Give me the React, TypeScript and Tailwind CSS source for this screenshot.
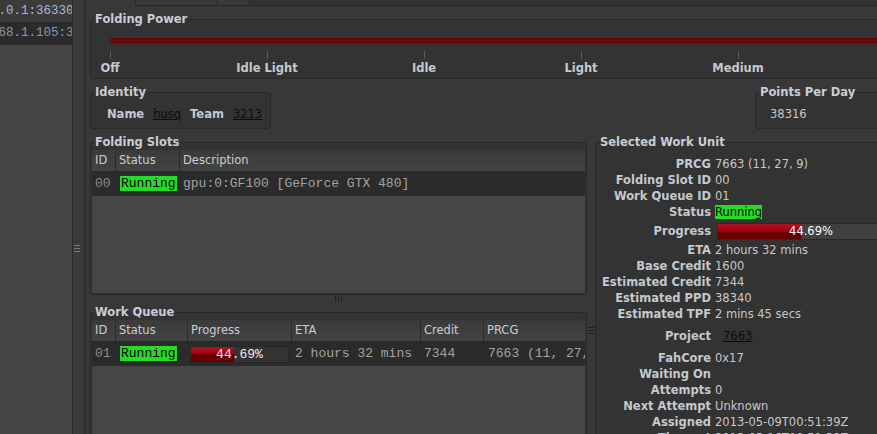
import type { ReactNode } from "react";

const mono = "font-['Liberation_Mono',monospace]";
const redFill =
  "bg-[linear-gradient(to_bottom,#ae1220_0%,#a0000e_50%,#6c0000_50%,#640000_100%)]";

const levels = ["Off", "Idle Light", "Idle", "Light", "Medium"];

const slotCols = [
  { name: "ID", w: "w-[24px]" },
  { name: "Status", w: "w-[64px]" },
  { name: "Description", w: "flex-1" },
];

const queueCols = [
  { name: "ID", w: "w-[24px]" },
  { name: "Status", w: "w-[72px]" },
  { name: "Progress", w: "w-[104px]" },
  { name: "ETA", w: "w-[129px]" },
  { name: "Credit", w: "w-[63px]" },
  { name: "PRCG", w: "flex-1" },
];

const details = [
  { label: "PRCG", value: "7663 (11, 27, 9)", h: "h-4" },
  { label: "Folding Slot ID", value: "00", h: "h-4" },
  { label: "Work Queue ID", value: "01", h: "h-4" },
  { label: "Status", value: "Running", h: "h-4", kind: "status" },
  { label: "Progress", value: "44.69%", h: "h-[22px]", kind: "progress" },
  { label: "ETA", value: "2 hours 32 mins", h: "h-4" },
  { label: "Base Credit", value: "1600", h: "h-4" },
  { label: "Estimated Credit", value: "7344", h: "h-4" },
  { label: "Estimated PPD", value: "38340", h: "h-4" },
  { label: "Estimated TPF", value: "2 mins 45 secs", h: "h-4" },
  { label: "Project", value: "7663", h: "h-[28px]", kind: "link" },
  { label: "FahCore", value: "0x17", h: "h-4" },
  { label: "Waiting On", value: "", h: "h-4" },
  { label: "Attempts", value: "0", h: "h-4" },
  { label: "Next Attempt", value: "Unknown", h: "h-4" },
  { label: "Assigned", value: "2013-05-09T00:51:39Z", h: "h-4" },
  { label: "Timeout", value: "2013-05-16T00:51:39Z", h: "h-4" },
];

function Group({ title, className = "", children }: { title: string; className?: string; children: ReactNode }) {
  return (
    <fieldset className={`min-w-0 rounded-[4px] border border-[#282828] bg-[#333333] ${className}`}>
      <legend className="ml-[3px] px-px text-[11.5px] font-bold leading-[13px] text-[#c8ced6]">{title}</legend>
      {children}
    </fieldset>
  );
}

function Table({ cols, children }: { cols: { name: string; w: string }[]; children: ReactNode }) {
  return (
    <div className="flex h-full flex-col">
      <div className="flex h-[22px] shrink-0 border-b border-[#262626] bg-gradient-to-b from-[#3a3a3a] to-[#444444] leading-[21px] text-[#c9cdd2]">
        {cols.map((c, i) => (
          <div
            key={c.name}
            className={`${c.w} shrink-0 pl-[3px] ${i < cols.length - 1 ? "border-r border-[#2a2a2a]" : ""}`}
          >
            {c.name}
          </div>
        ))}
      </div>
      <div className={`flex h-[24px] shrink-0 items-center overflow-hidden whitespace-nowrap bg-[#2b2b2b] ${mono} text-[13px] text-[#a2a2a2]`}>
        {children}
      </div>
      <div className="flex-1 bg-[#464646]" />
    </div>
  );
}

function Running() {
  return <span className={`bg-[#22dd22] px-px leading-4 text-black ${mono}`}>Running</span>;
}

export default function App() {
  return (
    <div className="flex h-[434px] w-[877px] overflow-hidden bg-[#383838] font-['DejaVu_Sans',sans-serif] text-[11.5px] text-[#c3c9d0]">
      {/* client list */}
      <div className={`w-[72px] shrink-0 overflow-hidden bg-[#444444] ${mono} text-[12.5px]`}>
        <div className="h-[22px] overflow-hidden bg-[#3b3b3b] leading-[22px] text-[#a2bad8]">
          <div className="ml-[-39px] whitespace-nowrap">127.0.0.1:36330</div>
        </div>
        <div className="h-[23px] overflow-hidden bg-[#2b2b2b] leading-[23px] text-[#8299b2]">
          <div className="ml-[-39px] whitespace-nowrap">192.168.1.105:36330</div>
        </div>
      </div>

      {/* splitter */}
      <div className="flex w-[13px] shrink-0 flex-col gap-[2px] border-x border-[#2a2a2a] bg-[#3a3a3a] pl-px pt-[245px]">
        <div className="h-px w-[6px] bg-[#7a7a7a]" />
        <div className="h-px w-[6px] bg-[#7a7a7a]" />
        <div className="h-px w-[6px] bg-[#7a7a7a]" />
      </div>

      <div className="flex min-w-0 flex-1 flex-col overflow-hidden">
        {/* tab strip */}
        <div className="flex h-[6px] shrink-0">
          <div className="w-[50px] shrink-0" />
          <div className="w-[83px] shrink-0 border-x border-b border-[#262626] bg-[#3a3a3a]" />
          <div className="w-[32px] shrink-0 border-r border-b border-[#262626] bg-[#3a3a3a]" />
          <div className="flex-1 border-b border-[#262626] bg-[#323232]" />
        </div>

        <div className="w-[815px] shrink-0 pl-[5px]">
          <Group title="Folding Power" className="mt-[7px]">
            <div className="pb-[3px] pl-[19px] pt-[12px]">
              <div className="h-[5px] rounded-l-[3px] bg-[linear-gradient(to_bottom,#560202,#7e0a0a_50%,#560202)]" />
              <div className="mt-[8px] flex gap-[157px]">
                {levels.map((l) => (
                  <div key={l} className="flex w-0 shrink-0 flex-col items-center">
                    <div className="h-[8px] w-px bg-[#5a5a5a]" />
                    <div className="mt-[3px] whitespace-nowrap font-bold leading-[13px]">{l}</div>
                  </div>
                ))}
              </div>
            </div>
          </Group>

          <div className="mt-[7px] flex justify-between">
            <Group title="Identity" className="w-[181px]">
              <div className="flex gap-[9px] pb-[7px] pl-[16px] pt-[9px] leading-[13px]">
                <span className="font-bold">Name</span>
                <span className="text-[#0c0c0c] underline">husq</span>
                <span className="font-bold">Team</span>
                <span className="text-[#0c0c0c] underline">3213</span>
              </div>
            </Group>
            <Group title="Points Per Day" className="w-[145px]">
              <div className="pb-[7px] pl-[14px] pt-[9px] leading-[13px] text-[#c8c8c8]">38316</div>
            </Group>
          </div>

          <div className="mt-[7px] flex">
            <div className="w-[497px] shrink-0">
              <Group title="Folding Slots">
                <div className="h-[145px] p-px">
                  <Table cols={slotCols}>
                    <div className="w-[24px] shrink-0 pl-[3px] text-[#8c8c8c]">00</div>
                    <div className="w-[64px] shrink-0 pl-[4px]">
                      <Running />
                    </div>
                    <div className="flex-1 pl-[3px]">gpu:0:GF100 [GeForce GTX 480]</div>
                  </Table>
                </div>
              </Group>

              <div className="flex h-[11px] justify-center gap-[2px] pt-px">
                <div className="h-[6px] w-px bg-[#222222]" />
                <div className="h-[6px] w-px bg-[#222222]" />
                <div className="h-[6px] w-px bg-[#222222]" />
              </div>

              <Group title="Work Queue">
                <div className="h-[140px] p-px">
                  <Table cols={queueCols}>
                    <div className="w-[24px] shrink-0 pl-[3px] text-[#8c8c8c]">01</div>
                    <div className="w-[72px] shrink-0 pl-[4px]">
                      <Running />
                    </div>
                    <div className="w-[104px] shrink-0 pl-[2px]">
                      <div className="relative h-[17px] w-[99px] border border-[#262626] bg-[#333333]">
                        <div className={`h-full ${redFill}`} style={{ width: "44.69%" }} />
                        <div className="absolute inset-0 text-center leading-[15px] text-[#ececec]">44.69%</div>
                      </div>
                    </div>
                    <div className="w-[129px] shrink-0 pl-[3px]">2 hours 32 mins</div>
                    <div className="w-[63px] shrink-0 pl-[3px]">7344</div>
                    <div className="flex-1 pl-[4px]">7663 (11, 27, 9)</div>
                  </Table>
                </div>
              </Group>
            </div>

            <div className="flex w-[8px] shrink-0 flex-col items-center gap-[2px] pt-[191px]">
              <div className="h-px w-[6px] bg-[#1e1e1e]" />
              <div className="h-px w-[6px] bg-[#1e1e1e]" />
              <div className="h-px w-[6px] bg-[#1e1e1e]" />
            </div>

            <Group title="Selected Work Unit" className="flex-1">
              <div className="pt-[7px]">
                {details.map((d) => (
                  <div key={d.label} className={`flex items-center leading-4 ${d.h}`}>
                    <div className="w-[115px] shrink-0 text-right font-bold">{d.label}</div>
                    <div className="ml-[4px] flex-1 whitespace-nowrap text-[#c8c8c8]">
                      {d.kind === "status" ? (
                        <span className="bg-[#22dd22] text-black">{d.value}</span>
                      ) : d.kind === "progress" ? (
                        <div className="relative ml-[2px] h-[17px] w-[188px] border border-[#2a2a2a] bg-[#404040]">
                          <div className={`h-full ${redFill}`} style={{ width: "44.69%" }} />
                          <div className="absolute inset-0 text-center leading-[15px] text-white">{d.value}</div>
                        </div>
                      ) : d.kind === "link" ? (
                        <span className="ml-[8px] text-[#0c0c0c] underline">{d.value}</span>
                      ) : (
                        d.value
                      )}
                    </div>
                  </div>
                ))}
              </div>
            </Group>
          </div>
        </div>
      </div>
    </div>
  );
}
